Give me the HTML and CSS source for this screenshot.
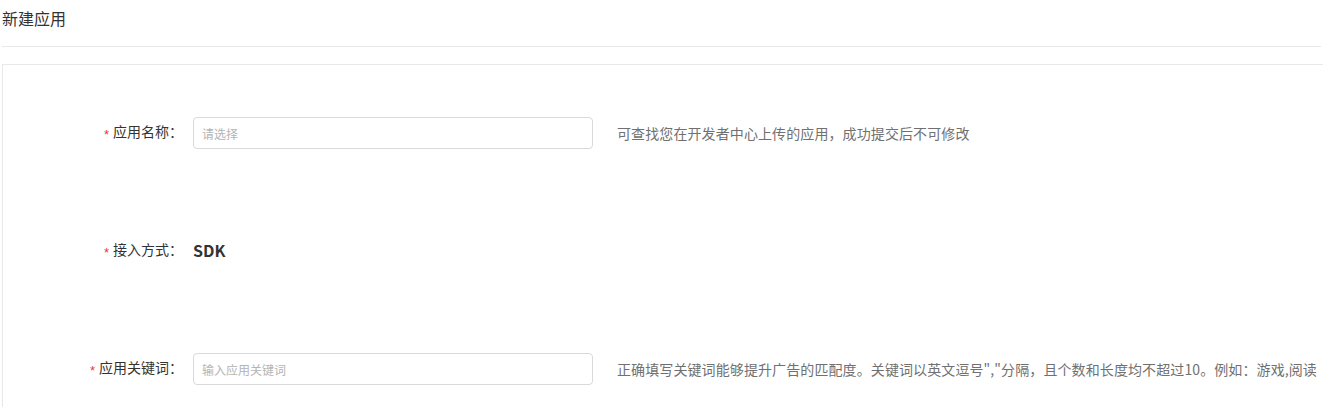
FILE: index.html
```html
<!DOCTYPE html>
<html lang="zh-CN">
<head>
<meta charset="utf-8">
<title>新建应用</title>
<link rel="stylesheet" href="styles.css">
</head>
<body>
<div class="page">
  <div class="page-header">
    <h1 class="page-title">新建应用</h1>
  </div>
  <div class="panel">
    <div class="form">
      <div class="form-row">
        <label class="form-label"><span class="req">*</span>应用名称：</label>
        <div class="form-control">
          <input class="text-input" type="text" placeholder="请选择">
        </div>
        <div class="form-hint">可查找您在开发者中心上传的应用，成功提交后不可修改</div>
      </div>
      <div class="form-row">
        <label class="form-label"><span class="req">*</span>接入方式：</label>
        <div class="form-value">SDK</div>
      </div>
      <div class="form-row">
        <label class="form-label"><span class="req">*</span>应用关键词：</label>
        <div class="form-control">
          <input class="text-input" type="text" placeholder="输入应用关键词">
        </div>
        <div class="form-hint">正确填写关键词能够提升广告的匹配度。关键词以英文逗号","分隔，且个数和长度均不超过10。例如：游戏,阅读</div>
      </div>
    </div>
  </div>
</div>
</body>
</html>
```

FILE: styles.css
```css
html, body {
  margin: 0;
  padding: 0;
  overflow: hidden;
  background: #ffffff;
}

body {
  font-family: "Noto Sans CJK SC", "Noto Sans", "Liberation Sans", sans-serif;
  color: #333333;
}

.page {
  padding: 0 2px;
}

.page-header {
  height: 46px;
  border-bottom: 1px solid #e8e8e8;
}

.page-title {
  margin: 0;
  padding-top: 8px;
  font-size: 16px;
  line-height: 20px;
  font-weight: normal;
  color: #333333;
}

.panel {
  margin-top: 17px;
  width: 1360px;
  height: 343px;
  border-top: 1px solid #e8e8e8;
  border-left: 1px solid #e8e8e8;
  box-sizing: border-box;
  padding-top: 52px;
}

.form {
  display: flex;
  flex-direction: column;
  gap: 86px;
}

.form-row {
  display: flex;
  align-items: center;
  height: 32px;
}

.form-label {
  width: 180px;
  margin-right: 10px;
  text-align: right;
  font-size: 14px;
  line-height: 20px;
  color: #333333;
  white-space: nowrap;
}

.req {
  display: inline-block;
  color: #e4393c;
  font-size: 13px;
  margin-right: 4px;
  vertical-align: -2px;
  font-family: "Liberation Sans", sans-serif;
}

.form-control {
  width: 400px;
}

.text-input {
  display: block;
  width: 100%;
  height: 32px;
  box-sizing: border-box;
  border: 1px solid #d9d9d9;
  border-radius: 4px;
  padding: 0 8px;
  font-family: inherit;
  font-size: 12px;
  color: #333333;
  outline: none;
  background: #ffffff;
}

.text-input::placeholder {
  color: #b4b4b4;
}

.form-value {
  font-size: 16px;
  font-weight: bold;
  color: #333333;
  margin-top: -3px;
}

.form-hint {
  margin-left: 24px;
  font-size: 14px;
  line-height: 20px;
  color: #707070;
  white-space: nowrap;
  letter-spacing: 0.1px;
}
```
